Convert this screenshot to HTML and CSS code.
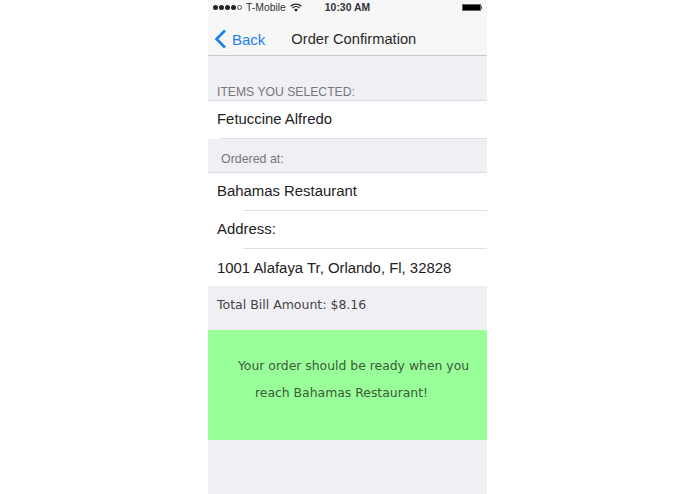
FILE: index.html
```html
<!DOCTYPE html>
<html>

<head>
    <title>Order Confirmation</title>
    <link rel="stylesheet" href="styles.css">
</head>

<body>
    <div class="phone">
        <div class="top-bar">
            <div class="status">
                <div class="carrier">
                    <span class="dots">
                        <i class="dot"></i><i class="dot"></i><i class="dot"></i><i class="dot"></i><i class="dot empty"></i>
                    </span>
                    <span>T-Mobile</span>
                    <svg class="wifi" width="12" height="9" viewBox="0 0 12 9">
                        <path d="M0.6 3.2C3.6 0.4 8.4 0.4 11.4 3.2" fill="none" stroke="#222" stroke-width="1.2"/>
                        <path d="M2.5 5C4.5 3.2 7.5 3.2 9.5 5" fill="none" stroke="#222" stroke-width="1.2"/>
                        <path d="M4 6.6L6 8.8L8 6.6C6.9 5.6 5.1 5.6 4 6.6Z" fill="#222"/>
                    </svg>
                </div>
                <div class="clock">10:30 AM</div>
                <div class="battery"><span class="cell"></span><span class="nub"></span></div>
            </div>
            <div class="nav">
                <a class="back">
                    <svg width="13" height="20" viewBox="0 0 13 20">
                        <path d="M11 1.5L2.5 10L11 18.5" fill="none" stroke="#1a7fe8" stroke-width="2.6"/>
                    </svg>
                    <span>Back</span>
                </a>
                <div class="title">Order Confirmation</div>
            </div>
        </div>

        <div class="section-label items-label">ITEMS YOU SELECTED:</div>
        <div class="group">
            <div class="row short-rule">Fetuccine Alfredo</div>
        </div>

        <div class="section-label ordered-label">Ordered at:</div>
        <div class="group">
            <div class="row long-rule">Bahamas Restaurant</div>
            <div class="row long-rule">Address:</div>
            <div class="row">1001 Alafaya Tr, Orlando, Fl, 32828</div>
        </div>

        <div class="total">Total Bill Amount: $8.16</div>

        <div class="notice">
            <p>Your order should be ready when you</p>
            <p class="second-line">reach Bahamas Restaurant!</p>
        </div>
    </div>
</body>

</html>
```

FILE: styles.css
```css
html, body {
    height: 100%;
}

body {
    margin: 0;
    background-color: #ffffff;
    font-family: "Liberation Sans", Arial, sans-serif;
    overflow: hidden;
}

.phone {
    width: 279px;
    height: 494px;
    margin-left: 208px;
    background-color: #efeff4;
    color: #222222;
}

.top-bar {
    height: 55px;
    background-color: #f7f7f8;
    border-bottom: 1px solid #c9c9cb;
}

.status {
    height: 15px;
    display: flex;
    align-items: center;
    font-size: 10.4px;
    color: #333333;
}

.carrier {
    display: flex;
    align-items: center;
    margin-left: 5px;
    gap: 4px;
}

.dots {
    display: flex;
    gap: 1px;
}

.dot {
    width: 5px;
    height: 5px;
    border-radius: 50%;
    background-color: #222222;
}

.dot.empty {
    box-sizing: border-box;
    background: none;
    border: 1px solid #555555;
}

.clock {
    margin-left: 23px;
    font-weight: bold;
}

.battery {
    display: flex;
    align-items: center;
    margin-left: auto;
    margin-right: 5px;
}

.cell {
    width: 19px;
    height: 7px;
    background-color: #000000;
    border: 1px solid #666666;
    box-sizing: border-box;
}

.nub {
    width: 1px;
    height: 3px;
    background-color: #555555;
}

.nav {
    height: 32px;
    padding-top: 8px;
    display: flex;
    align-items: center;
    font-size: 14.7px;
}

.back {
    display: flex;
    align-items: center;
    gap: 5px;
    margin-left: 6px;
    color: #1a7fe8;
    font-size: 15px;
}

.title {
    margin-left: 26px;
    color: #2a2a2a;
}

.section-label {
    color: #77777b;
}

.items-label {
    height: 44px;
    padding-left: 9px;
    display: flex;
    align-items: flex-end;
    font-size: 12.2px;
    line-height: 15px;
    border-bottom: 1px solid #dcdce0;
}

.ordered-label {
    height: 33px;
    box-sizing: border-box;
    padding: 6px 0 0 13px;
    display: flex;
    align-items: center;
    font-size: 12.4px;
}

.group {
    background-color: #ffffff;
}

.ordered-label + .group {
    border-top: 1px solid #dcdce0;
}

.row {
    height: 38px;
    box-sizing: border-box;
    padding: 0 0 2px 9px;
    display: flex;
    align-items: center;
    font-size: 14.9px;
    position: relative;
}

.row.short-rule {
    padding-bottom: 3px;
}

.row:last-child:not(.short-rule) {
    height: 37px;
    padding-bottom: 0;
}

/* separators don't run the whole width */
.short-rule::after,
.long-rule::after {
    content: "";
    position: absolute;
    right: 0;
    bottom: 0;
    height: 1px;
    background-color: #dfdfe3;
}

.short-rule::after {
    left: 13px;
}

.long-rule::after {
    left: 35px;
}

.total {
    height: 44px;
    box-sizing: border-box;
    padding: 0 0 8px 9px;
    display: flex;
    align-items: center;
    font-family: "DejaVu Sans", Verdana, sans-serif;
    font-size: 12.5px;
    color: #444444;
}

.notice {
    height: 110px;
    box-sizing: border-box;
    padding-top: 22px;
    background-color: #99ff99;
    font-family: "DejaVu Sans", Verdana, sans-serif;
    font-size: 12.4px;
    color: #3a5a3a;
    text-align: center;
}

.notice p {
    margin: 0;
    line-height: 27px;
    padding-left: 12px;
}

.notice .second-line {
    padding: 0 12px 0 0;
}
```
